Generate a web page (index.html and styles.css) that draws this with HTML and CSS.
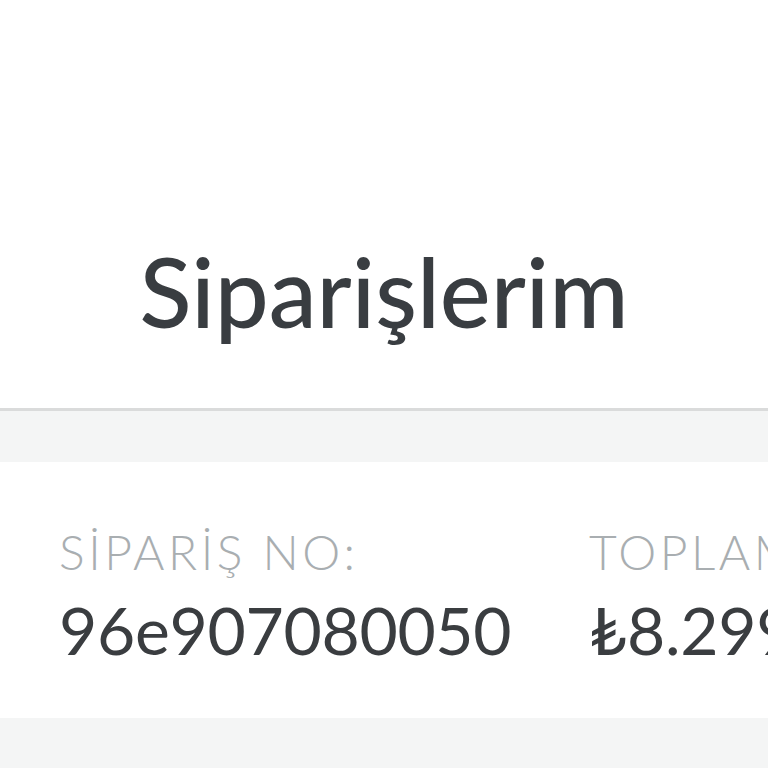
FILE: index.html
```html
<!DOCTYPE html>
<html lang="tr">
<head>
<meta charset="utf-8">
<link rel="stylesheet" href="styles.css">
</head>
<body>
<header class="header">
  <h1 class="title">Siparişlerim</h1>
</header>
<div class="gap"></div>
<section class="card">
  <div class="col col-no">
    <div class="label">SİPARİŞ NO:</div>
    <div class="value">96e907080050</div>
  </div>
  <div class="col">
    <div class="label">TOPLAM:</div>
    <div class="value">₺8.299,00</div>
  </div>
</section>
<div class="rest"></div>
</body>
</html>
```
FILE: styles.css
```css
html, body {
  margin: 0;
  padding: 0;
  width: 768px;
  height: 768px;
  overflow: hidden;
  background: #f4f5f5;
  font-family: Lato, "Noto Sans", sans-serif;
}
.header {
  background: #ffffff;
  height: 408px;
  border-bottom: 3px solid #dadbdb;
  display: flex;
  align-items: flex-start;
  justify-content: center;
}
.title {
  margin: 243px 0 0 0;
  font-size: 96px;
  font-weight: 500;
  line-height: 1;
  color: #393d41;
  letter-spacing: 0;
}
.gap {
  height: 51px;
}
.card {
  background: #ffffff;
  height: 256px;
  display: flex;
  padding: 0 0 0 59px;
  white-space: nowrap;
  overflow: hidden;
}
.col {
  display: flex;
  flex-direction: column;
  flex-shrink: 0;
  padding-top: 62px;
}
.col-no {
  width: 530px;
}
.label {
  font-size: 48px;
  font-weight: 300;
  color: #a9aeb1;
  line-height: 56px;
  letter-spacing: 3.5px;
}
.value {
  font-size: 66px;
  font-weight: 400;
  color: #3a3d40;
  line-height: 100px;
  letter-spacing: -0.3px;
}
.rest {
  height: 60px;
}
```
